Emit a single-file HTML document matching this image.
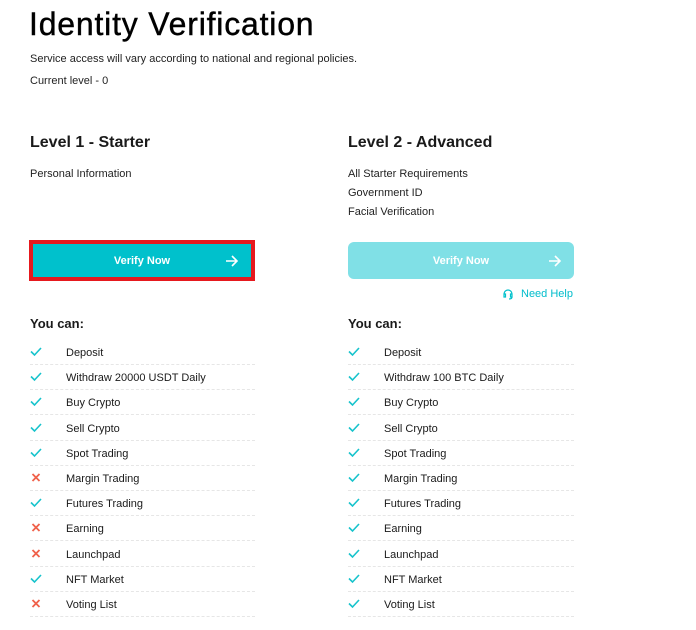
<!DOCTYPE html>
<html><head><style>
body{margin:0;background:#fff;font-family:"Liberation Sans",sans-serif;color:#1a1a1a;width:696px;height:630px;overflow:hidden;position:relative}
.a{position:absolute;white-space:nowrap}
h1{position:absolute;left:29px;top:6px;margin:0;font-size:32px;font-weight:normal;-webkit-text-stroke:0.4px #000;color:#000;letter-spacing:0.8px}
.s{font-size:11px;color:#222}
.h{font-size:16px;font-weight:bold;color:#1a1a1a}
.btn{position:absolute;display:flex;align-items:center;justify-content:center;color:#fff;font-size:11px;font-weight:bold}
.btn svg{position:absolute;right:12px}
.row{position:absolute;height:25px;border-bottom:1px dashed #e6e6e6;font-size:11px}
.row span{position:absolute;left:36px;top:8px}
.row svg{position:absolute;left:0;top:7px}
</style></head><body>
<h1>Identity Verification</h1>
<div class="a s" style="left:30px;top:53px">Service access will vary according to national and regional policies.</div>
<div class="a s" style="left:30px;top:75px">Current level - 0</div>
<div class="a h" style="left:30px;top:134px">Level 1 - Starter</div>
<div class="a h" style="left:348px;top:134px">Level 2 - Advanced</div>
<div class="a s" style="left:30px;top:168px">Personal Information</div>
<div class="a s" style="left:348px;top:168px">All Starter Requirements</div>
<div class="a s" style="left:348px;top:187px">Government ID</div>
<div class="a s" style="left:348px;top:206px">Facial Verification</div>
<div class="btn" style="left:29px;top:240px;width:218px;height:33px;background:#00c1cc;border:4px solid #e6191e">Verify Now<svg width="14" height="12" viewBox="0 0 14 12"><path d="M1 6H12M7 1L12 6L7 11" stroke="#fff" stroke-width="1.6" fill="none"/></svg></div>
<div class="btn" style="left:348px;top:242px;width:226px;height:37px;background:#80e0e6;border-radius:6px">Verify Now<svg width="14" height="12" viewBox="0 0 14 12"><path d="M1 6H12M7 1L12 6L7 11" stroke="#fff" stroke-width="1.6" fill="none"/></svg></div>
<svg class="a" style="left:502px;top:288px" width="12" height="12" viewBox="0 0 12 12"><path d="M2 7V6a4 4 0 0 1 8 0v1M2 6h1.5v3H2zM10 6H8.5v3H10zM10 9q0 2-3 2" stroke="#00c1cc" stroke-width="1.2" fill="none"/></svg>
<div class="a" style="left:521px;top:288px;font-size:11px;color:#00bccb">Need Help</div>
<div class="a" style="left:30px;top:316px;font-size:13px;font-weight:bold">You can:</div>
<div class="a" style="left:348px;top:316px;font-size:13px;font-weight:bold">You can:</div>
<div id="L"></div>
<script>
var items=["Deposit","Withdraw 20000 USDT Daily","Buy Crypto","Sell Crypto","Spot Trading","Margin Trading","Futures Trading","Earning","Launchpad","NFT Market","Voting List"];
var items2=items.slice();items2[1]="Withdraw 100 BTC Daily";
var ok1=[1,1,1,1,1,0,1,0,0,1,0];
var chk='<svg width="12" height="11" viewBox="0 0 12 11"><path d="M1 5.5L4.5 9L11 2" stroke="#17c3cc" stroke-width="1.6" fill="none"/></svg>';
var x='<svg width="12" height="11" viewBox="0 0 12 11"><path d="M2.5 2L9.5 9M9.5 2L2.5 9" stroke="#f0614a" stroke-width="1.8" fill="none"/></svg>';
var h='';
for(var i=0;i<11;i++){var t=339+i*25.2;
h+='<div class="row" style="left:30px;top:'+t+'px;width:225px">'+(ok1[i]?chk:x)+'<span>'+items[i]+'</span></div>';
h+='<div class="row" style="left:348px;top:'+t+'px;width:226px">'+chk+'<span>'+items2[i]+'</span></div>';}
document.getElementById('L').innerHTML=h;
</script>
</body></html>
